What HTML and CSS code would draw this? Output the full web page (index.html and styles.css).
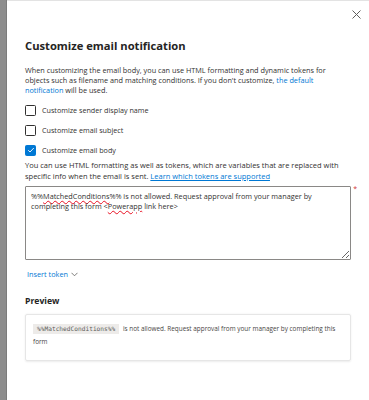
FILE: index.html
```html
<!DOCTYPE html>
<html>
<head>
<meta charset="utf-8">
<link rel="stylesheet" href="styles.css">
</head>
<body>
<div class="backdrop"></div>
<div class="panel">
  <div class="topbar">
    <button class="close" aria-label="Close">
      <svg width="9" height="9" viewBox="0 0 9 9"><path d="M0.5 0.5 L8.5 8.5 M8.5 0.5 L0.5 8.5" stroke="#605e5c" stroke-width="1" fill="none"/></svg>
    </button>
  </div>
  <h1 class="title">Customize email notification</h1>
  <p class="desc">When customizing the email body, you can use HTML formatting and dynamic tokens for objects such as filename and matching conditions. If you don't customize, <a class="link" href="#">the default notification</a> will be used.</p>
  <div class="checks">
    <label class="check"><span class="box"></span><span>Customize sender display name</span></label>
    <label class="check"><span class="box"></span><span>Customize email subject</span></label>
    <label class="check"><span class="box on"><svg width="8" height="8" viewBox="0 0 8 8"><path d="M1.2 4.2 L3 6 L6.8 2" stroke="#fff" stroke-width="0.9" fill="none"/></svg></span><span>Customize email body</span></label>
  </div>
  <p class="help">You can use HTML formatting as well as tokens, which are variables that are replaced with specific info when the email is sent. <a class="link u" href="#">Learn which tokens are supported</a></p>
  <div class="field">
    <div class="textarea">%%<span class="sp">MatchedConditions</span>%% is not allowed. Request approval from your manager by completing this form &lt;<span class="sp">Powerapp</span> link here&gt;</div>
    <span class="req">*</span>
  </div>
  <a class="insert" href="#">Insert token <svg width="7" height="5" viewBox="0 0 7 5"><path d="M0.5 0.8 L3.5 3.8 L6.5 0.8" stroke="#605e5c" stroke-width="0.8" fill="none"/></svg></a>
  <h2 class="preview-title">Preview</h2>
  <div class="preview">
    <div class="preview-line"><span class="chip">%%MatchedConditions%%</span> is not allowed. Request approval from your manager by completing this form</div>
  </div>
</div>
</body>
</html>
```
FILE: styles.css
```css
html, body {
  margin: 0;
  padding: 0;
  height: 400px;
  overflow: hidden;
}
body {
  display: flex;
  font-family: "Open Sans", "Noto Sans", sans-serif;
  color: #323130;
  background: #fff;
}
.backdrop {
  width: 6px;
  flex: none;
  background: #8d8d8d;
  border-right: 1px solid #7c7c7c;
}
.panel {
  flex: 1;
  background: #fff;
  border-top: 1px solid #e3e3e3;
  padding: 0 18px;
}
.topbar {
  display: flex;
  justify-content: flex-end;
  height: 35px;
  margin-right: -10px;
}
.close {
  border: 0;
  background: none;
  padding: 0;
  margin-top: 9px;
  width: 9px;
  height: 9px;
  display: flex;
}
.title {
  margin: 0;
  font-size: 11.2px;
  line-height: 20px;
  font-weight: 700;
  color: #252423;
}
.desc {
  margin: 9px 0 0;
  font-size: 7.3px;
  line-height: 10px;
}
.link {
  color: #0078d4;
  text-decoration: none;
}
.link.u {
  text-decoration: underline;
}
.checks {
  margin-top: 5px;
  display: flex;
  flex-direction: column;
}
.check {
  display: flex;
  align-items: center;
  height: 20px;
  font-size: 7.2px;
  gap: 6px;
}
.box {
  width: 9px;
  height: 9px;
  border: 1px solid #323130;
  border-radius: 1.5px;
  display: flex;
  align-items: center;
  justify-content: center;
}
.box.on {
  background: #0078d4;
  border-color: #0078d4;
}
.help {
  margin: 0;
  font-size: 7.5px;
  line-height: 11px;
}
.field {
  position: relative;
  margin-top: 4px;
}
.textarea {
  height: 66px;
  border: 1px solid #8a8886;
  border-radius: 1px;
  padding: 4px 5px 2px;
  font-size: 7.3px;
  line-height: 10px;
  overflow: auto;
  resize: vertical;
}
.sp {
  text-decoration: underline wavy #e81123;
  text-decoration-thickness: 0.5px;
  text-underline-offset: 1px;
}
.req {
  position: absolute;
  right: -6px;
  top: -2px;
  color: #d13438;
  font-size: 7px;
}
.insert {
  display: inline-flex;
  align-items: center;
  gap: 3px;
  margin: 6px 0 0 2px;
  font-size: 7.3px;
  line-height: 12px;
  color: #0078d4;
  text-decoration: none;
}
.preview-title {
  margin: 12px 0 0;
  font-size: 8.6px;
  line-height: 14px;
  font-weight: 700;
  color: #252423;
}
.preview {
  margin-top: 6px;
  height: 47px;
  box-sizing: border-box;
  border: 1px solid #e6e6e6;
  border-radius: 2px;
  box-shadow: 0 0.5px 2px rgba(0,0,0,0.08);
  padding: 7px 7px;
}
.preview-line {
  font-size: 6.4px;
  line-height: 13px;
  color: #484644;
}
.chip {
  display: inline-block;
  vertical-align: middle;
  background: #edebe9;
  font-family: "DejaVu Sans Mono", monospace;
  font-size: 6.2px;
  line-height: 10px;
  padding: 0 4px;
  margin-right: 2px;
  color: #605e5c;
}
```
